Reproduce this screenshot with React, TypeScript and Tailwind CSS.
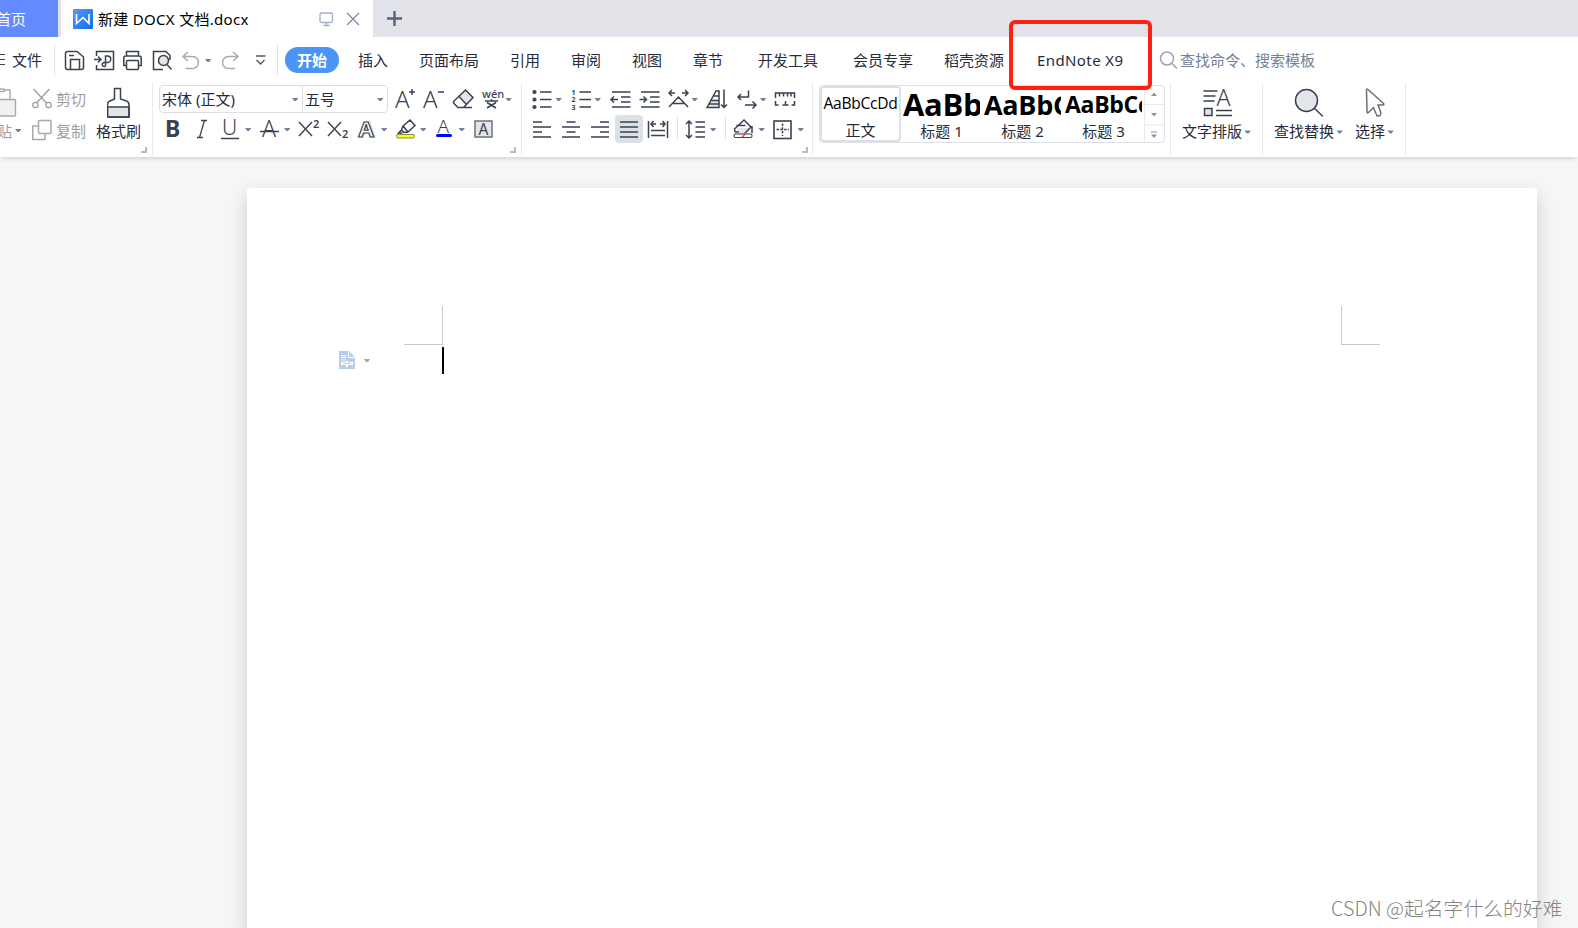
import type { ReactNode } from 'react';
import { clsx } from 'clsx';

const INK = '#3a4150';
const FAINT = '#a9abb0';

// Small drop-down triangle, drawn inside a tool's own svg
function Caret({ x, y }: { x: number; y: number }) {
  return <path d={`M${x} ${y}h6.4l-2.4 3h-1.6z`} fill="#75809a" stroke="none" />;
}

function Tool({ className, color = INK, children }: { className: string; color?: string; children?: ReactNode }) {
  return (
    <svg
      className={clsx('h-6 shrink-0 overflow-visible', className)}
      fill="none"
      stroke={color}
      strokeWidth={1.5}
    >
      {children}
    </svg>
  );
}

function Letter({ x, y, size, children, fill = INK, className = 'font-light' }: {
  x: number; y: number; size: number; children: ReactNode; fill?: string; className?: string;
}) {
  return (
    <text x={x} y={y} fontSize={size} fill={fill} stroke="none" className={className}>
      {children}
    </text>
  );
}

function Corner() {
  return (
    <svg className="h-[7px] w-[7px] shrink-0" fill="none" stroke="#b4bccb" strokeWidth={2}>
      <path d="M0 5h5V0" />
    </svg>
  );
}

function Group({ className, children }: { className: string; children: ReactNode }) {
  return <div className={clsx('h-[72px] shrink-0 border-r border-[#e9eaed]', className)}>{children}</div>;
}

const menuTabs = [
  { label: '插入', width: 'w-[61px]' },
  { label: '页面布局', width: 'w-[91px]' },
  { label: '引用', width: 'w-[61px]' },
  { label: '审阅', width: 'w-[61px]' },
  { label: '视图', width: 'w-[61px]' },
  { label: '章节', width: 'w-[65px]' },
  { label: '开发工具', width: 'w-[95px]' },
  { label: '会员专享', width: 'w-[91px]' },
  { label: '稻壳资源', width: 'w-[93px]' },
  { label: 'EndNote X9', width: 'w-[121px] tracking-[0.4px]' },
];

const styleCards = [
  { sample: 'AaBbCcDd', label: '正文', text: 'text-[15.6px]', active: true },
  { sample: 'AaBb', label: '标题 1', text: 'text-[31px] font-bold', active: false },
  { sample: 'AaBbC', label: '标题 2', text: 'text-[27px] font-bold', active: false },
  { sample: 'AaBbCc', label: '标题 3', text: 'text-[23px] font-bold', active: false },
];

function TabBar() {
  return (
    <div className="flex h-[37px] shrink-0 bg-[#e2e3e8]">
      <div className="mr-[3px] flex w-[58px] items-center bg-[#638bff] text-white">
        <span className="-ml-1 whitespace-nowrap">首页</span>
      </div>
      <div className="flex w-[312px] items-center bg-white pl-3">
        <svg className="h-5 w-5" viewBox="0 0 20 20" fill="none">
          <defs>
            <linearGradient id="logo" x1="0" y1="0" x2="1" y2="1">
              <stop offset="0" stopColor="#5b9bf7" />
              <stop offset="1" stopColor="#0c6cf0" />
            </linearGradient>
          </defs>
          <rect width="20" height="20" rx="1" fill="url(#logo)" />
          <path d="M3.500 5V14.500L10 8.500l6 6V5" stroke="#fff" strokeWidth="1.6" />
        </svg>
        <span className="ml-[5px] w-[221px] whitespace-nowrap tracking-[0.3px] text-black">新建 DOCX 文档.docx</span>
        <svg className="h-5 w-[50px] shrink-0" fill="none" stroke="#a5aec2" strokeWidth={1.3}>
          <path d="M1 5.500q0-1.500 1.500-1.500h9.500q1.500 0 1.500 1.500v6.500q0 1.500-1.500 1.500h-9.500q-1.500 0-1.500-1.500zM7.500 14v3M4.500 16.500h6" />
          <path d="M28 4l12 12M40 4l-12 12" stroke="#7e8aa5" />
        </svg>
      </div>
      <svg className="h-[37px] w-11" stroke="#56617d" strokeWidth={2.4}>
        <path d="M14 18.500h15M21.500 11v15" />
      </svg>
    </div>
  );
}

function MenuBar() {
  return (
    <div className="flex h-[46px] shrink-0 items-center">
      <Tool className="w-3">
        <path d="M0 6.500h5M0 11.500h5M0 16.500h5" strokeWidth={1.2} />
      </Tool>
      <span className="w-[42px] whitespace-nowrap">文件</span>
      <span className="h-[30px] w-px bg-[#dfe1e5]" />
      {/* Save, export, print, preview, undo, redo */}
      <Tool className="w-[29px]">
        <path d="M12.500 3.500H22L28.500 9V19.500q0 2-2 2H12.500q-2 0-2-2V5.500q0-2 2-2zM15.500 21.500V11.500H24.500V21.500" />
        <path d="M14 7.500h5" />
      </Tool>
      <Tool className="w-[29px]">
        <path d="M12.500 8V3.500H29.500V21.500H12.500V17" />
        <path d="M10 11.500h7M14 8.500l3 3-3 3" />
        <path d="M21.500 14.500V8h2a3 3 0 0 1 0 6.500h-3a2 2 0 1 0 1 3.500V14" />
      </Tool>
      <Tool className="w-[29px]">
        <path d="M13.500 8V3.500H25.500V8M13.500 17.500H10.800V10q0-2 2-2H26.200q2 0 2 2v7.500H25.500" />
        <rect x="13.500" y="12.500" width="12" height="9" rx="1" />
      </Tool>
      <Tool className="w-[29px]">
        <path d="M21 21.500H11.500V3.500H24l4 4V12" />
        <circle cx="21.500" cy="12.500" r="5" fill="#e4e5e8" />
        <path d="M25 16.500l4.500 5" />
      </Tool>
      <Tool className="w-[40px]" color={FAINT}>
        <path d="M17 4l-5 4.500 5 4.500M12 8.500h9.500a6 6 0 0 1 0 12H14.500" />
        <Caret x={34} y={11} />
      </Tool>
      <Tool className="w-[35px]" color={FAINT}>
        <path d="M22 4l5 4.500-5 4.500M26.500 8.500h-9a6 6 0 0 0 0 12H24" />
      </Tool>
      <Tool className="w-[31px]" color="#555b66">
        <path d="M10 8h9.500M10.500 12l4 4 4-4" />
      </Tool>
      <span className="h-[30px] w-px bg-[#dfe1e5]" />
      <span className="ml-[7px] mr-[19px] flex h-[26px] w-[54px] items-center justify-center rounded-full bg-[#4a94f5] font-bold text-white">
        开始
      </span>
      {menuTabs.map((tab) => (
        <span key={tab.label} className={clsx('shrink-0 whitespace-nowrap', tab.width)}>
          {tab.label}
        </span>
      ))}
      <Tool className="w-[22px]" color="#98a2b9">
        <circle cx="9" cy="10.500" r="6.500" />
        <path d="M14 15.500l5 5" />
      </Tool>
      <span className="whitespace-nowrap text-[#747f97]">查找命令、搜索模板</span>
    </div>
  );
}

function ClipboardGroup() {
  return (
    <Group className="flex w-[153px] text-[#9c9da2]">
      <div className="flex w-8 flex-col">
        <svg className="h-[38px] w-8" fill="none" stroke="#a9a9a9" strokeWidth={1.4}>
          <path d="M0 8.500h4.500V6M0 6h4.500M4.500 7h5.500v9" />
          <rect x="-6" y="16.500" width="21.500" height="16.500" rx="1" fill="#f1f1f2" />
        </svg>
        <div className="-mt-[2px] flex h-6">
          <span className="-ml-[3px] w-[15px]">贴</span>
          <Tool className="w-4"><Caret x={3} y={10} /></Tool>
        </div>
      </div>
      <div className="flex w-16 flex-col pt-1">
        <div className="flex h-[30px]">
          <Tool className="w-6" color="#9d9d9f">
            <path d="M1.500 2L14.500 16M17.500 2L4.500 16" strokeWidth={1.3} />
            <circle cx="3.500" cy="18" r="2.700" strokeWidth={1.2} />
            <circle cx="16.500" cy="18" r="2.700" strokeWidth={1.2} />
          </Tool>
          <span className="whitespace-nowrap">剪切</span>
        </div>
        <div className="flex h-[30px]">
          <Tool className="w-6" color="#a9a9a9">
            <path d="M7 9H.800V22.500H13V17" />
            <rect x="6.500" y="3.500" width="12.500" height="13" rx="1" fill="#fff" />
          </Tool>
          <span className="whitespace-nowrap pt-[2px]">复制</span>
        </div>
      </div>
      <div className="flex w-[45px] flex-col items-center text-[#262c3b]">
        <svg className="h-[38px] w-6 shrink-0" fill="none" stroke={INK} strokeWidth={1.5}>
          <path d="M.500 24h21.500v10H.500z" fill="#e4e5e8" />
          <path d="M7.500 5.500h6V16l6 2q2.500 1 2.500 3.500V34H.500V21.500q0-2.500 2.500-3.500l4.500-2z" />
        </svg>
        <span className="-mt-[2px] whitespace-nowrap">格式刷</span>
      </div>
      <div className="mt-[64px]"><Corner /></div>
    </Group>
  );
}

function FontGroup() {
  return (
    <Group className="w-[369px] pl-[6px] pt-[2px]">
      <div className="flex h-7 items-center">
        <div className="flex h-[28px] w-[229px] shrink-0 items-center rounded-sm border border-[#dcdee3]">
          <div className="flex h-full w-[143px] items-center border-r border-[#dcdee3] pl-[2px]">
            <span className="w-[130px] whitespace-nowrap">宋体 (正文)</span>
            <Tool className="w-2"><Caret x={0} y={11} /></Tool>
          </div>
          <span className="w-[74px] pl-[2px]">五号</span>
          <Tool className="w-2"><Caret x={0} y={11} /></Tool>
        </div>
        <Tool className="w-[29px]">
          <Letter x={7} y={20.500} size={24}>A</Letter>
          <path d="M21 5h6M24 2v6" />
        </Tool>
        <Tool className="w-[29px]">
          <Letter x={6} y={20.500} size={24}>A</Letter>
          <path d="M21 5h6" />
        </Tool>
        <Tool className="w-[30px]">
          <path d="M13 9.500l7-6.500 7 7-7 7.500z" fill="#e4e5e8" stroke="none" />
          <path d="M19.500 3L27 10.500 17.500 20.500H12L7.500 16V14.500zM13 9.500l7.500 8M12 20.500h14" />
        </Tool>
        <Tool className="w-9">
          <Letter x={6} y={11} size={11} className="font-medium">wén</Letter>
          <path d="M9 14h13M15.500 12v2M11 15.500l9 5.500M20 15.500l-9 5.500" />
          <Caret x={29.500} y={11} />
        </Tool>
      </div>
      <div className="mt-[4px] flex h-6">
        <Tool className="w-[29px]">
          <Letter x={6} y={20} size={23} className="font-bold">B</Letter>
        </Tool>
        <Tool className="w-[29px]">
          <path d="M13 3.500h6M9 20.500h6M16.500 3.500L11.500 20.500" strokeWidth={1.3} />
        </Tool>
        <Tool className="w-[40px]">
          <Letter x={5} y={17.500} size={21}>U</Letter>
          <path d="M4 21.500h18" />
          <Caret x={28} y={11} />
        </Tool>
        <Tool className="w-[37px]">
          <Letter x={5} y={19.500} size={23}>A</Letter>
          <path d="M3 14.500h19" />
          <Caret x={27} y={11} />
        </Tool>
        <Tool className="w-[29px]">
          <path d="M5 5l13 14M18 5L5 19" strokeWidth={1.4} />
          <Letter x={19} y={11} size={11} className="font-semibold">2</Letter>
        </Tool>
        <Tool className="w-[29px]">
          <path d="M5 5l13 14M18 5L5 19" strokeWidth={1.4} />
          <Letter x={19} y={21} size={11} className="font-semibold">2</Letter>
        </Tool>
        <Tool className="w-[40px]">
          <text x={8} y={20.500} fontSize={23} fill="#e0e2e7" stroke="none" className="font-bold">A</text>
          <text x={6.500} y={19.500} fontSize={22} fill="#fff" strokeWidth={1.2} className="font-bold">A</text>
          <Caret x={29} y={11} />
        </Tool>
        <Tool className="w-[38px]">
          <rect x="4.500" y="17.500" width="18" height="3.500" rx="1.500" fill="#ff0" stroke="#888a45" strokeWidth={1} />
          <path d="M11 9l7-6 5 5.500-7 6.500zM11 9l-1.500 4 2.500 2.500 4-.500M9.500 13l-3 3h4" />
          <Caret x={28} y={11} />
        </Tool>
        <Tool className="w-[39px]">
          <Letter x={7.500} y={15.500} size={19}>A</Letter>
          <path d="M7.500 18.500h13" stroke="#0000fe" strokeWidth={3} strokeLinecap="round" />
          <Caret x={28.500} y={11} />
        </Tool>
        <Tool className="w-[29px]">
          <rect x="6" y="4" width="17" height="16" fill="#e4e5e8" stroke="#6d717b" />
          <Letter x={9.500} y={17.500} size={15.500} className="font-normal">A</Letter>
        </Tool>
      </div>
      <div className="ml-[351px] mt-[6px]"><Corner /></div>
    </Group>
  );
}

function ParagraphGroup() {
  return (
    <Group className="w-[291px] pl-[5px] pt-1">
      <div className="flex h-6">
        <Tool className="w-[39px]">
          <path d="M13 5h11.500M13 12.500h11.500M13 20h11.500" />
          <g strokeWidth={1.8}>
            <circle cx="7.500" cy="5" r="1.200" />
            <circle cx="7.500" cy="12.500" r="1.200" />
            <circle cx="7.500" cy="20" r="1.200" />
          </g>
          <Caret x={28.500} y={11} />
        </Tool>
        <Tool className="w-[39px]">
          <path d="M13.500 5h11.500M13.500 12.500h11.500M13.500 20h11.500" />
          <g className="font-bold" fontSize={7} fill={INK} stroke="none">
            <text x={5.500} y={7.500}>1</text>
            <text x={5.500} y={15}>2</text>
            <text x={5.500} y={22.500}>3</text>
          </g>
          <Caret x={28.500} y={11} />
        </Tool>
        <Tool className="w-[29px]">
          <path d="M7 5h18.500M16 10h9.500M16 15h9.500M7 20h18.500M6 12.500h7M9 9.500l-3 3 3 3" />
        </Tool>
        <Tool className="w-[29px]">
          <path d="M7 5h18.500M16 10h9.500M16 15h9.500M7 20h18.500M5.500 12.500h7M9.500 9.500l3 3-3 3" />
        </Tool>
        <Tool className="w-[39px]">
          <path d="M6 6h6M9 3L6 6l3 3M19 6h6M22 3l3 3-3 3M6 20l9.500-10L25 20M10 16.500h11" />
          <Caret x={28.500} y={11} />
        </Tool>
        <Tool className="w-[30px]">
          <path d="M9 14h7.500v6H6z" fill="#e4e5e8" stroke="none" />
          <path d="M5 20.500L14 4h3v16.500zM9 13.500h8M12 9h5M7 17h10M22 2.500v18M19 17.500l3 3 3-3" />
        </Tool>
        <Tool className="w-[38px]">
          <path d="M16.500 3.500V10H6M9 7l-3 3 3 3M13 18h10.500M20.500 14.500l3.500 3.500-3.500 3.500" />
          <Caret x={28} y={11} />
        </Tool>
        <Tool className="w-[29px]">
          <path d="M5.500 11V6h19v5M9.500 6v3.500M13.500 6v3.500M17.500 6v3.500M21 6v3.500M5.500 14v4h3M12.500 18h6M15.500 14v4M24.500 14v4h-3" />
        </Tool>
      </div>
      <div className="mt-[3px] flex h-[30px] items-center">
        <Tool className="w-[29px]">
          <path d="M6 5h9M6 10h18M6 15h9M6 20h18" />
        </Tool>
        <Tool className="w-[29px]">
          <path d="M10.500 5h9M6 10h18M10.500 15h9M6 20h18" />
        </Tool>
        <Tool className="w-[30px]">
          <path d="M15 5h9M6 10h18M15 15h9M6 20h18" />
        </Tool>
        <div className="-mt-px h-7 w-7 shrink-0 rounded-sm bg-[#dce1e6] pt-[2px]">
          <Tool className="w-7">
            <path d="M5 5h18M5 10h18M5 15h18M5 20h18" />
          </Tool>
        </div>
        <Tool className="w-[34px]">
          <path d="M5.500 4v17M24.500 4v17M8 7h5M10.500 4L8 7l2.500 3M17 7h5M19.500 4l2.500 3-2.500 3M8 13.500h14M8 18.500h14" />
        </Tool>
        <span className="-mt-[2px] h-[22px] w-px bg-[#dfe1e5]" />
        <Tool className="w-[47px]">
          <path d="M11 4v17M8 7l3-3 3 3M8 18l3 3 3-3M17.500 5h9.500M17.500 10h9.500M17.500 15h9.500M17.500 20h9.500" />
          <Caret x={32} y={11} />
        </Tool>
        <span className="-mt-[2px] h-[22px] w-px bg-[#dfe1e5]" />
        <Tool className="w-[42px]">
          <path d="M11 11h14l-6 6h-5z" fill="#e4e5e8" stroke="none" />
          <path d="M9 15l-.500-3L18 3l7 7-6 6M9 15h4M26 9v7M10.500 8.500h9" />
          <rect x="8" y="17" width="18" height="3.500" rx="1.500" strokeWidth={1.100} />
          <path d="M16 20.500l4-4.500" stroke="#e43c3c" strokeWidth={1.300} />
          <Caret x={32.500} y={11} />
        </Tool>
        <Tool className="w-[38px]">
          <rect x="6" y="4" width="17" height="17.500" strokeWidth={1.600} />
          <path d="M14.500 6.500v12.500M8.500 12.500h12.500" strokeDasharray="2.500 1.300" />
          <Caret x={29.500} y={11} />
        </Tool>
      </div>
      <div className="ml-[275px] mt-[3px]"><Corner /></div>
    </Group>
  );
}

function StylesGroup() {
  return (
    <Group className="w-[358px] pl-[6px] pt-[2px]">
      <div className="flex h-[58px] w-[346px] rounded-sm border border-[#dfe0e6]">
        {styleCards.map((card) => (
          <div
            key={card.label}
            className={clsx(
              'flex h-[56px] w-[81px] shrink-0 flex-col items-center rounded-sm',
              card.active ? 'border-2 border-[#dfe0e6]' : 'pt-[2px]'
            )}
          >
            <div
              className={clsx(
                'flex h-[33px] w-[77px] items-center overflow-hidden whitespace-nowrap font-["Open_Sans"] leading-none tracking-[-0.3px] text-black',
                card.active && 'justify-center',
                card.text
              )}
            >
              {card.sample}
            </div>
            <span className="leading-[20px]">{card.label}</span>
          </div>
        ))}
        <div className="flex w-5 flex-col border-l border-[#e9eaed]">
          <svg className="h-[56px] w-[19px]" fill="#8993a8">
            <path d="M6 10l2.500-3h1l2.500 3zM6 27h6l-2.500 3h-1zM6 46.500h6v-1h-6zM6 48.500h6l-2.500 3h-1z" />
            <path d="M0 18.500h19M0 39h19" stroke="#e9eaed" />
          </svg>
        </div>
      </div>
    </Group>
  );
}

function BigTool({ label, className, children }: { label: string; className: string; children: ReactNode }) {
  return (
    <div className={clsx('flex shrink-0 flex-col', className)}>
      <svg className="h-9 w-[70px] shrink-0" fill="none" stroke={INK} strokeWidth={1.5}>
        {children}
      </svg>
      <div className="flex whitespace-nowrap">
        <span>{label}</span>
        <Tool className="w-2"><Caret x={2.500} y={11.500} /></Tool>
      </div>
    </div>
  );
}

function Ribbon() {
  return (
    <div className="relative flex h-[74px] shrink-0 bg-white text-[#262c3b] shadow-[0_4px_4px_-2px_rgba(0,0,0,0.14)]">
      <ClipboardGroup />
      <FontGroup />
      <ParagraphGroup />
      <StylesGroup />
      <Group className="w-[92px] pl-[11px]">
        <BigTool label="文字排版" className="w-20">
          <path d="M21.500 8h14M21.500 13h12M21.500 18h11M34 27.500h16M34 32.500h16" />
          <rect x="22.500" y="25.500" width="7.500" height="7" fill="#e4e5e8" />
          <Letter x={34.500} y={23} size={23}>A</Letter>
        </BigTool>
      </Group>
      <Group className="flex w-[143px] pl-[11px]">
        <BigTool label="查找替换" className="w-[81px]">
          <circle cx="32.500" cy="17.500" r="11" fill="#e4e5e8" />
          <path d="M40 25l9 8.500" />
        </BigTool>
        <BigTool label="选择" className="w-12">
          <path d="M11.500 7q0-1.500 1.500-.500L28.500 20.500q1 1.500-.500 1.500h-5l3 8-1 2.500-3 .500-3.500-8.500-5 5q-1.500 1-1.500-.500z" stroke="#6a707b" />
        </BigTool>
      </Group>
    </div>
  );
}

function Document() {
  return (
    <div className="h-[771px] shrink-0 bg-[#f5f6f8] pl-[247px] pt-[31px]">
      <div className="h-[740px] w-[1290px] bg-white shadow-[0_8px_16px_1px_rgba(0,0,0,0.16)]">
        <div className="flex pt-[118px]">
          <div className="ml-[157px] h-[39px] w-[39px] border-b border-r border-[#c8c8c8]" />
          <div className="ml-[898px] h-[39px] w-[39px] border-b border-l border-[#c8c8c8]" />
        </div>
        <div className="flex pt-[2px]">
          <svg className="ml-[92px] mt-1 h-[18px] w-[103px]" fill="#b9cdec">
            <path d="M0 0h10l6 6v12H0z" />
            <path d="M9.500 .500v6H16M2 4.500h5M2 6.500h5M2 9h5" fill="none" stroke="#fff" />
            <path d="M2 12.500h12" fill="none" stroke="#fff" strokeWidth={3} />
            <path d="M8 10v6" stroke="#fff" strokeWidth={2} />
            <path d="M4 12.500h8" stroke="#b9cdec" />
            <path d="M25 8h6l-2 3h-2z" fill="#a8a8a8" />
          </svg>
          <span className="h-[27px] w-[2px] bg-black" />
        </div>
      </div>
    </div>
  );
}

export default function App() {
  return (
    <div className='relative flex h-[928px] w-[1578px] flex-col overflow-hidden bg-white font-["Noto_Sans","Noto_Sans_CJK_SC",sans-serif] text-[15px] leading-6 text-[#262c3b]'>
      <TabBar />
      <MenuBar />
      <Ribbon />
      <Document />

      {/* Highlight around the EndNote tab */}
      <div className="absolute left-[1009px] top-[20px] h-[70px] w-[143px] rounded-md border-4 border-[#ff2012]" />
      <div className='absolute bottom-[5px] left-[1331px] whitespace-nowrap font-["Noto_Sans_CJK_SC",sans-serif] text-[19.800px] font-light leading-[30px] text-[#858585]'>
        CSDN @起名字什么的好难
      </div>
    </div>
  );
}
